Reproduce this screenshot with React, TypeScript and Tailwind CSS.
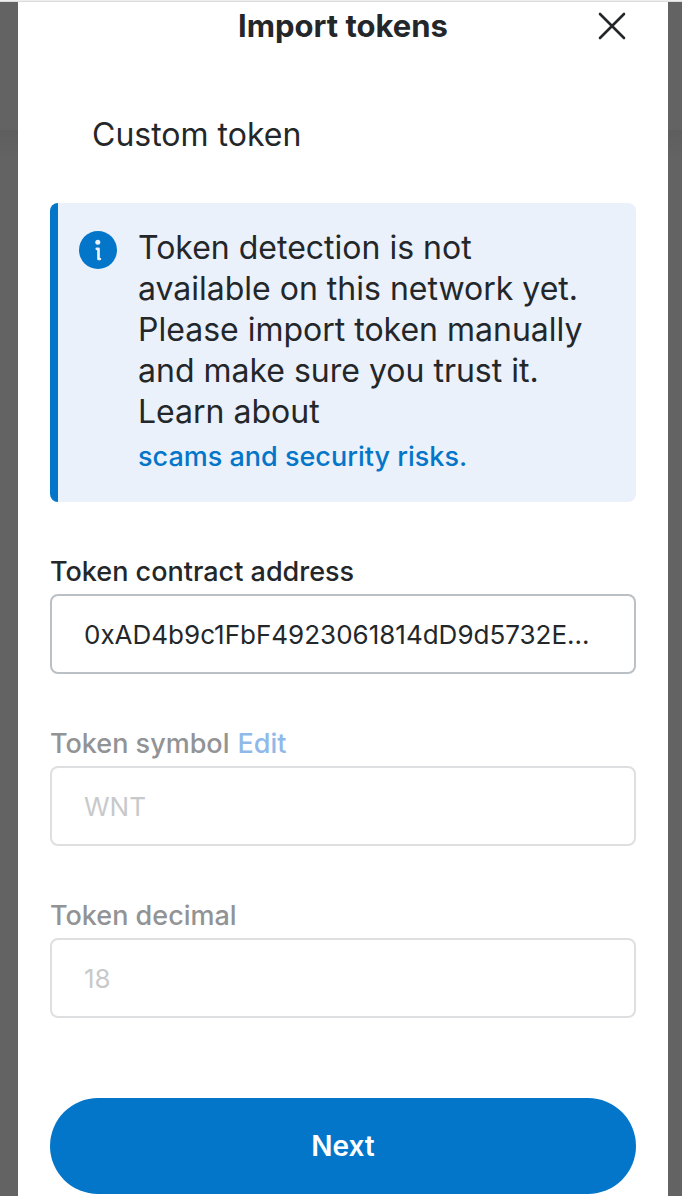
import { useState } from "react";

function InfoIcon() {
  return (
    <svg viewBox="0 0 38 38" className="size-[38px] shrink-0" aria-hidden="true">
      <circle cx="19" cy="19" r="19" fill="#0376c9" />
      <circle cx="18.8" cy="11.2" r="2.5" fill="#eaf1fb" />
      <path
        d="M17.8 17.8h1.7v10.2h1.4"
        fill="none"
        stroke="#eaf1fb"
        strokeWidth="2.7"
        strokeLinecap="round"
        strokeLinejoin="round"
      />
    </svg>
  );
}

function CloseIcon() {
  return (
    <svg viewBox="0 0 28 28" className="size-7" aria-hidden="true">
      <path
        d="M2 2L26 26M26 2L2 26"
        fill="none"
        stroke="#24272a"
        strokeWidth="2.6"
        strokeLinecap="round"
      />
    </svg>
  );
}

export default function App() {
  const [address, setAddress] = useState("0xAD4b9c1FbF4923061814dD9d5732E...");

  return (
    <div className="flex min-h-screen flex-col bg-[#636363] font-['Inter',sans-serif] text-[#24272a]">
      <div className="h-0.5 border-b border-[#dcdcdc] bg-[#eeeeee]" />

      <div className="flex grow bg-linear-[180deg,#636363_128px,#5e5e5e_128px,#636363_156px] pr-3.5 pl-[18px]">
        <section
          role="dialog"
          aria-labelledby="title"
          className="min-w-0 grow bg-white px-8 pb-0.5"
        >
          <header className="grid h-12 grid-cols-[1fr_auto_1fr] items-center">
            <h1 id="title" className="col-start-2 text-[31px] font-bold">
              Import tokens
            </h1>
            <button type="button" aria-label="Close" className="mr-2.5 justify-self-end">
              <CloseIcon />
            </button>
          </header>

          <h2 className="mt-16 mb-12 pl-[42px] text-[32px] leading-[41px]">
            Custom token
          </h2>

          <div className="flex gap-[21px] rounded-lg border-l-8 border-[#0376c9] bg-[#eaf1fb] py-6 pr-4 pl-[21px]">
            <div className="pt-1">
              <InfoIcon />
            </div>
            <div>
              <p className="text-[32px] leading-[41px]">
                Token detection is not
                <br />
                available on this network yet.
                <br />
                Please import token manually
                <br />
                and make sure you trust it.
                <br />
                Learn about
              </p>
              <a
                href="#"
                className="mt-1 block text-[27px] leading-[42px] font-medium text-[#0376c9]"
              >
                scams and security risks.
              </a>
            </div>
          </div>

          <form className="mt-12" onSubmit={(e) => e.preventDefault()}>
            <div className="mb-12">
              <label htmlFor="address" className="block text-[27px] leading-[44px] font-medium">
                Token contract address
              </label>
              <input
                id="address"
                value={address}
                onChange={(e) => setAddress(e.target.value)}
                className="block h-20 w-full rounded-lg border-2 border-[#bbc0c5] px-8 text-[26px] text-ellipsis"
              />
            </div>

            <div className="mb-12">
              <div className="flex gap-2 text-[27px] leading-[44px] font-medium">
                <label htmlFor="symbol" className="text-[#929395]">
                  Token symbol
                </label>
                <button type="button" className="text-[#8fb9e8]">
                  Edit
                </button>
              </div>
              <input
                id="symbol"
                value="WNT"
                disabled
                className="block h-20 w-full rounded-lg border-2 border-[#dddfe1] px-8 text-[26px] text-[#c8c9ca]"
              />
            </div>

            <div className="mb-20">
              <label
                htmlFor="decimal"
                className="block text-[27px] leading-[44px] font-medium text-[#929395]"
              >
                Token decimal
              </label>
              <input
                id="decimal"
                value="18"
                disabled
                className="block h-20 w-full rounded-lg border-2 border-[#dddfe1] px-8 text-[26px] text-[#c8c9ca]"
              />
            </div>

            <button
              type="submit"
              className="h-24 w-full rounded-full bg-[#0376c9] text-[28px] font-semibold text-white"
            >
              Next
            </button>
          </form>
        </section>
      </div>
    </div>
  );
}
